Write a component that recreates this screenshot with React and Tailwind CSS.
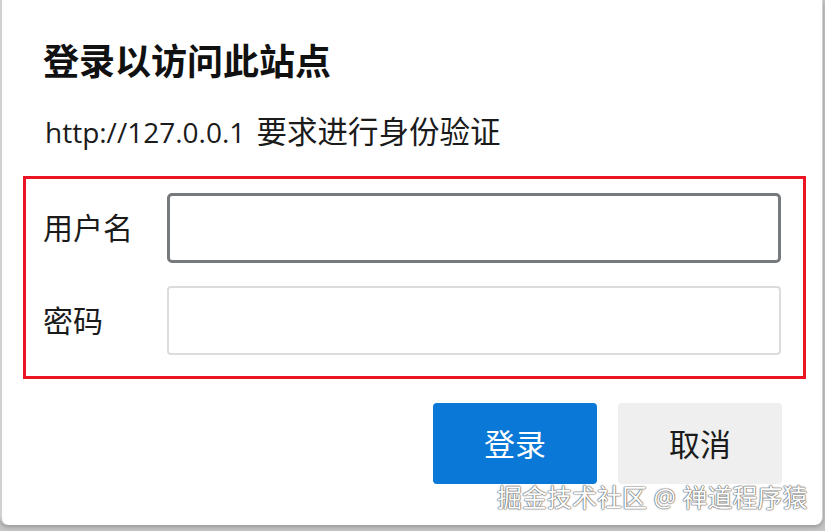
import React from 'react';

const font = "font-['Open_Sans','Noto_Sans_CJK_SC',sans-serif]";

const Field = ({ label, focused }) => (
  <div className="flex items-center">
    <label className="w-[124px] text-[30px] leading-[40px] text-[#1b1b1b]">{label}</label>
    <input
      className={
        focused
          ? 'w-[614px] h-[70px] rounded-[5px] border-[3px] border-[#777a7c] bg-white outline-none'
          : 'w-[614px] h-[69px] rounded-[4px] border-2 border-[#dcdcdc] bg-white outline-none'
      }
    />
  </div>
);

const App = () => {
  return (
    <div className={`w-[825px] h-[531px] bg-[#c6c6c6] ${font} relative overflow-hidden`}>
      <div className="w-[823px] h-[525px] bg-white border-l-2 border-r border-[#d0d0d0] rounded-b-[8px] shadow-[0_2px_4px_rgba(0,0,0,0.25)] flex flex-col">
        <h1 className="pt-[42px] pl-[41px] text-[36px] leading-[40px] font-bold text-[#111]">登录以访问此站点</h1>
        <p className="mt-[29px] pl-[43px] text-[28px] leading-[40px] text-[#1b1b1b]">
          http://127.0.0.1 <span className="ml-[4px] text-[30.5px]">要求进行身份验证</span>
        </p>

        <div className="mt-[24px] ml-[21px] w-[783px] border-[3px] border-[#ea1422] pl-[17px] pt-[14px] pb-[21px] flex flex-col gap-[23px]">
          <Field label="用户名" focused />
          <Field label="密码" />
        </div>

        <div className="mt-[24px] pr-[40px] flex justify-end gap-[21px]">
          <button className="w-[164px] h-[81px] rounded-[4px] bg-[#0a78d6] text-white text-[31px] leading-[40px]">登录</button>
          <button className="w-[164px] h-[81px] rounded-[4px] bg-[#efefef] text-[#1b1b1b] text-[31px] leading-[40px]">取消</button>
        </div>
      </div>

      <div className="absolute left-[497px] top-[483px] text-[25px] leading-[28px] text-white [text-shadow:0_0_1px_#555,0_0_1px_#555,0_0_2px_#777]">
        掘金技术社区 @ 禅道程序猿
      </div>
    </div>
  );
};

export default App;
